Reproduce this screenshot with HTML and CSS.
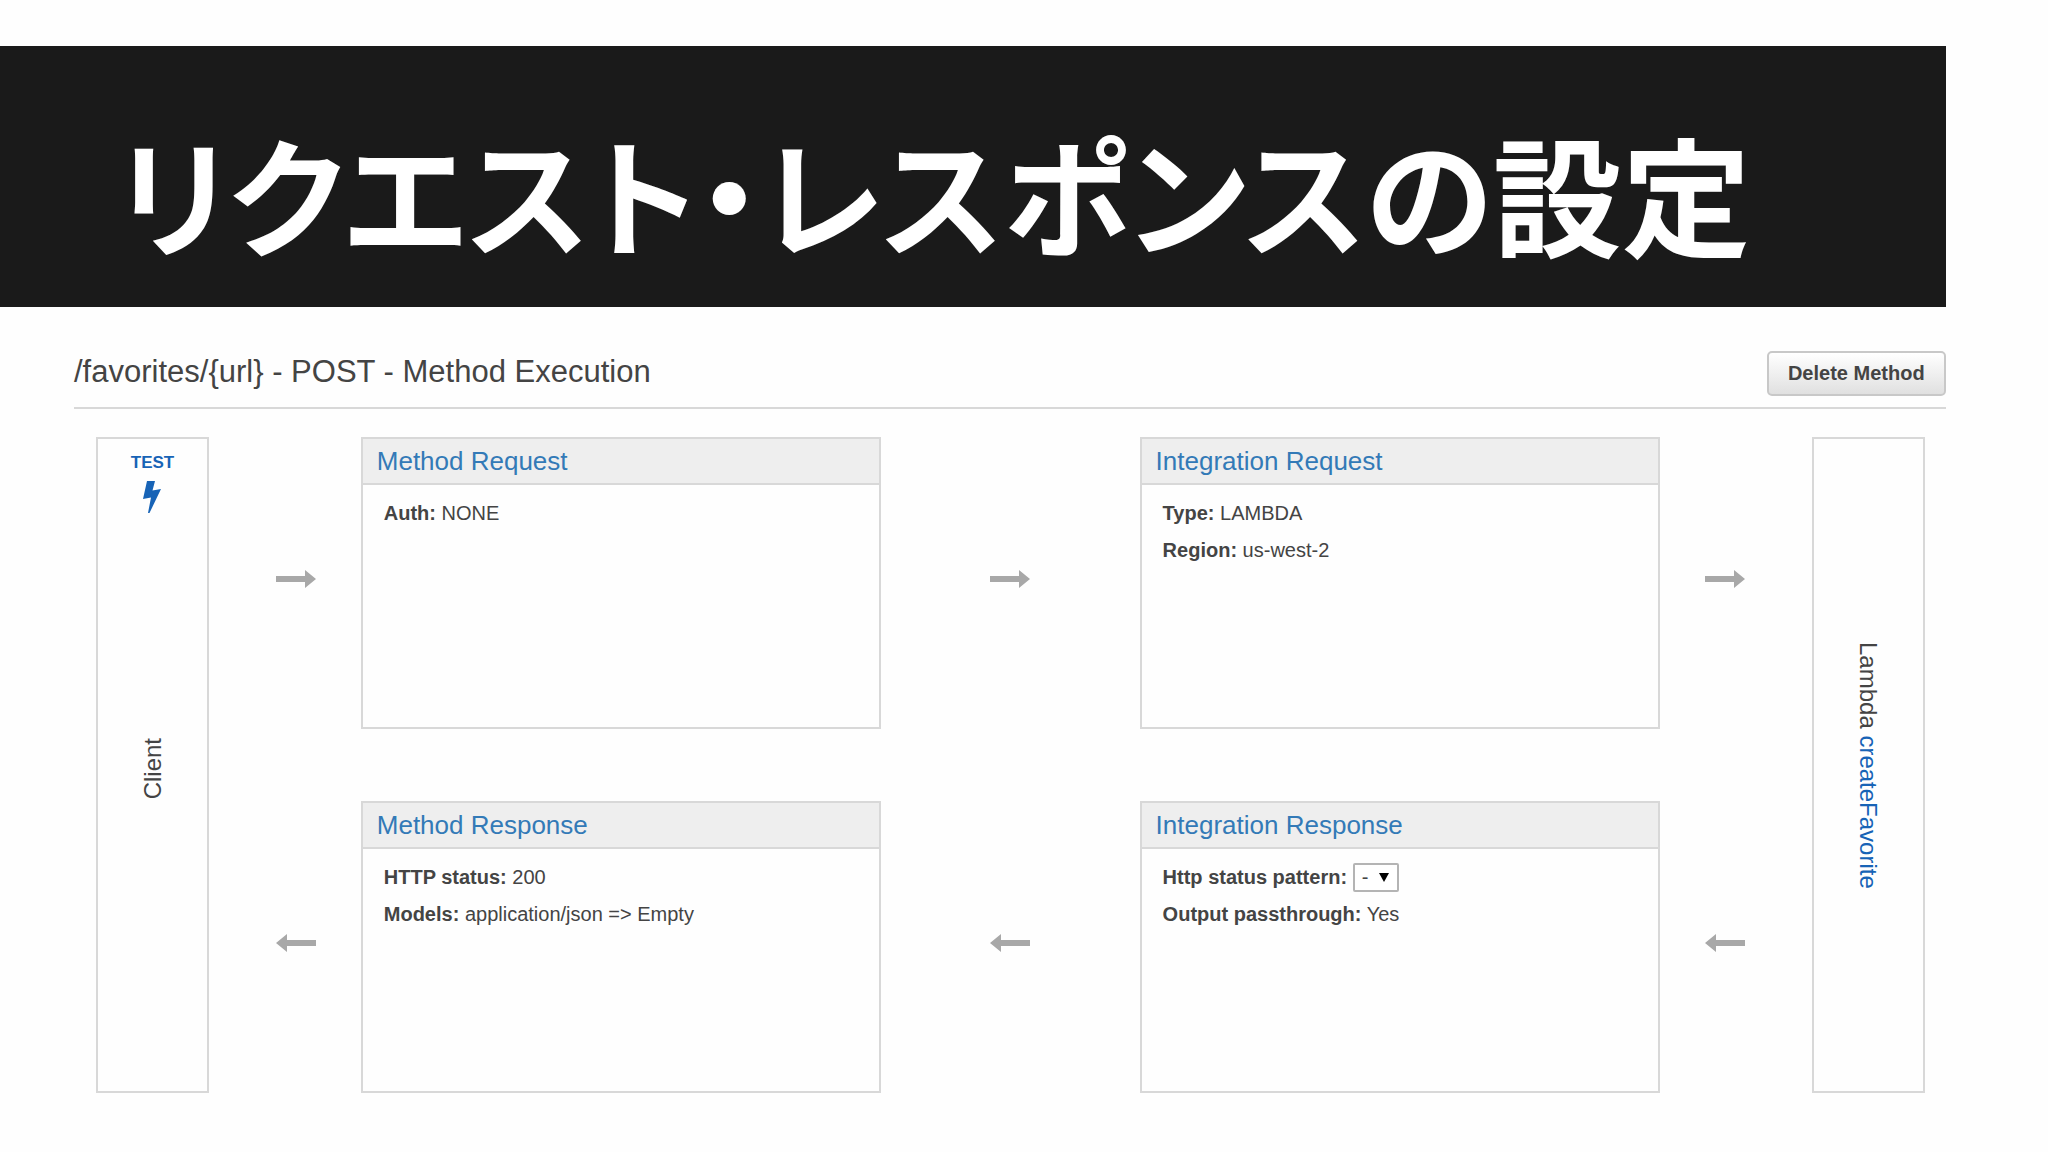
FILE: index.html
```html
<!DOCTYPE html>
<html lang="ja">
<head>
    <meta charset="UTF-8">
    <meta name="viewport" content="width=device-width, initial-scale=1.0">
    <title>リクエスト・レスポンスの設定</title>
    <link rel="stylesheet" href="styles.css">
</head>
<body>
    <!-- shared icons -->
    <svg class="sprite" aria-hidden="true">
        <symbol id="arrow" viewBox="0 0 40 18">
            <path d="M0 6h29V0l11 9-11 9v-6H0z"/>
        </symbol>
        <symbol id="bolt" viewBox="0 0 18 32">
            <path d="M4 0h8L9.500 9.500 18 8 6.500 32H5L8 16.500 0 18z"/>
        </symbol>
    </svg>

    <header class="banner">
        <h1>リクエスト・レスポンスの設定</h1>
    </header>

    <main class="content">
        <div class="toolbar">
            <h2>/favorites/{url} - POST - Method Execution</h2>
            <button type="button" class="delete">Delete Method</button>
        </div>

        <div class="flow">
            <section class="endpoint client">
                <a href="#test" class="test">
                    TEST
                    <svg class="bolt"><use href="#bolt"/></svg>
                </a>
                <span class="vertical up">Client</span>
            </section>

            <div class="arrow first"><svg><use href="#arrow"/></svg></div>

            <section class="panel">
                <h3><a href="#method-request">Method Request</a></h3>
                <div class="panel-body">
                    <p><b>Auth:</b> NONE</p>
                </div>
            </section>

            <div class="arrow"><svg><use href="#arrow"/></svg></div>

            <section class="panel">
                <h3><a href="#integration-request">Integration Request</a></h3>
                <div class="panel-body">
                    <p><b>Type:</b> LAMBDA</p>
                    <p><b>Region:</b> us-west-2</p>
                </div>
            </section>

            <div class="arrow last"><svg><use href="#arrow"/></svg></div>

            <section class="endpoint lambda">
                <span class="vertical">Lambda <a href="#createFavorite">createFavorite</a></span>
            </section>

            <div class="arrow back first"><svg><use href="#arrow"/></svg></div>

            <section class="panel">
                <h3><a href="#method-response">Method Response</a></h3>
                <div class="panel-body">
                    <p><b>HTTP status:</b> 200</p>
                    <p><b>Models:</b> application/json =&gt; Empty</p>
                </div>
            </section>

            <div class="arrow back"><svg><use href="#arrow"/></svg></div>

            <section class="panel">
                <h3><a href="#integration-response">Integration Response</a></h3>
                <div class="panel-body">
                    <p>
                        <label for="pattern">Http status pattern:</label>
                        <span class="select">
                            <select id="pattern">
                                <option>-</option>
                            </select>
                        </span>
                    </p>
                    <p><b>Output passthrough:</b> Yes</p>
                </div>
            </section>

            <div class="arrow back last"><svg><use href="#arrow"/></svg></div>
        </div>
    </main>
</body>
</html>
```
FILE: styles.css
```css
* {
    box-sizing: border-box;
}
body {
    margin: 0;
    background-color: #fefefe;
    color: #444;
    font-family: "Liberation Sans", "Noto Sans CJK JP", sans-serif;
    font-size: 20px;
}
h1, h2, h3, p {
    margin: 0;
}
a {
    color: #1763b6;
    text-decoration: none;
}
.sprite {
    display: none;
}
.banner {
    width: 95%;
    margin-top: 46px;
    padding: 66px 117px 35px;
    background-color: #1a1a1a;
    color: #fff;
}
.banner h1 {
    font-family: "Noto Sans CJK JP", sans-serif;
    font-size: 129px;
    font-weight: bold;
    line-height: 160px;
    font-feature-settings: "palt";
    white-space: nowrap;
}
.content {
    margin: 44px 5% 60px 74px;
}
.toolbar {
    display: flex;
    justify-content: space-between;
    align-items: flex-start;
    padding-bottom: 11px;
    border-bottom: 2px solid #d8d8d8;
}
.toolbar h2 {
    font-size: 31px;
    font-weight: normal;
    line-height: 42px;
}
.delete {
    height: 45px;
    padding: 0 19px;
    border: 2px solid #c8c8c8;
    border-radius: 5px;
    background: linear-gradient(#fff, #e0e0e0);
    color: #444;
    font-family: inherit;
    font-size: 20px;
    font-weight: bold;
    cursor: pointer;
}
.flow {
    display: grid;
    grid-template-columns: 113px 152fr 521fr 259fr 521fr 152fr 113px;
    grid-template-rows: 292px 292px;
    row-gap: 72px;
    margin: 28px 21px 0 22px;
}
.endpoint {
    grid-row: 1 / 3;
    display: grid;
    grid-template-rows: 1fr auto 1fr;
    justify-items: center;
    border: 2px solid #d8d8d8;
}
.client {
    grid-column: 1;
    padding-top: 8px;
}
.lambda {
    grid-column: 7;
}
.test {
    display: flex;
    flex-direction: column;
    align-items: center;
    gap: 6px;
    padding-top: 4px;
    font-size: 17px;
    font-weight: bold;
    line-height: 24px;
}
.bolt {
    width: 18px;
    height: 32px;
    fill: #1763b6;
}
.vertical {
    grid-row: 2;
    writing-mode: vertical-rl;
    font-size: 24px;
    line-height: 28px;
}
.up {
    transform: rotate(180deg);
}
.arrow {
    display: flex;
    align-items: center;
    justify-content: center;
    padding-bottom: 8px;
}
.arrow svg {
    width: 40px;
    height: 18px;
    fill: #a8a8a8;
}
.back svg {
    transform: rotate(180deg);
}
.first {
    padding-left: 22px;
}
.last {
    padding-right: 22px;
}
.panel {
    border: 2px solid #d8d8d8;
}
.panel h3 {
    padding: 0 14px;
    border-bottom: 2px solid #d8d8d8;
    background-color: #eee;
    font-size: 26px;
    font-weight: normal;
    line-height: 44px;
}
.panel h3 a {
    color: #337ab7;
}
.panel-body {
    padding: 10px 21px;
    line-height: 37px;
}
.panel-body p {
    height: 37px;
}
.panel-body label {
    font-weight: bold;
}
.select {
    display: inline-block;
    position: relative;
    line-height: 29px;
}
.select select {
    appearance: none;
    width: 46px;
    height: 29px;
    padding: 0 7px;
    border: 2px solid #b4b4b4;
    border-radius: 2px;
    background-color: #fff;
    color: #444;
    font-family: inherit;
    font-size: 20px;
}
/* dropdown triangle */
.select::after {
    content: "";
    position: absolute;
    top: 10px;
    right: 10px;
    border: 5px solid transparent;
    border-top: 9px solid #000;
    border-bottom: 0;
    pointer-events: none;
}
```
